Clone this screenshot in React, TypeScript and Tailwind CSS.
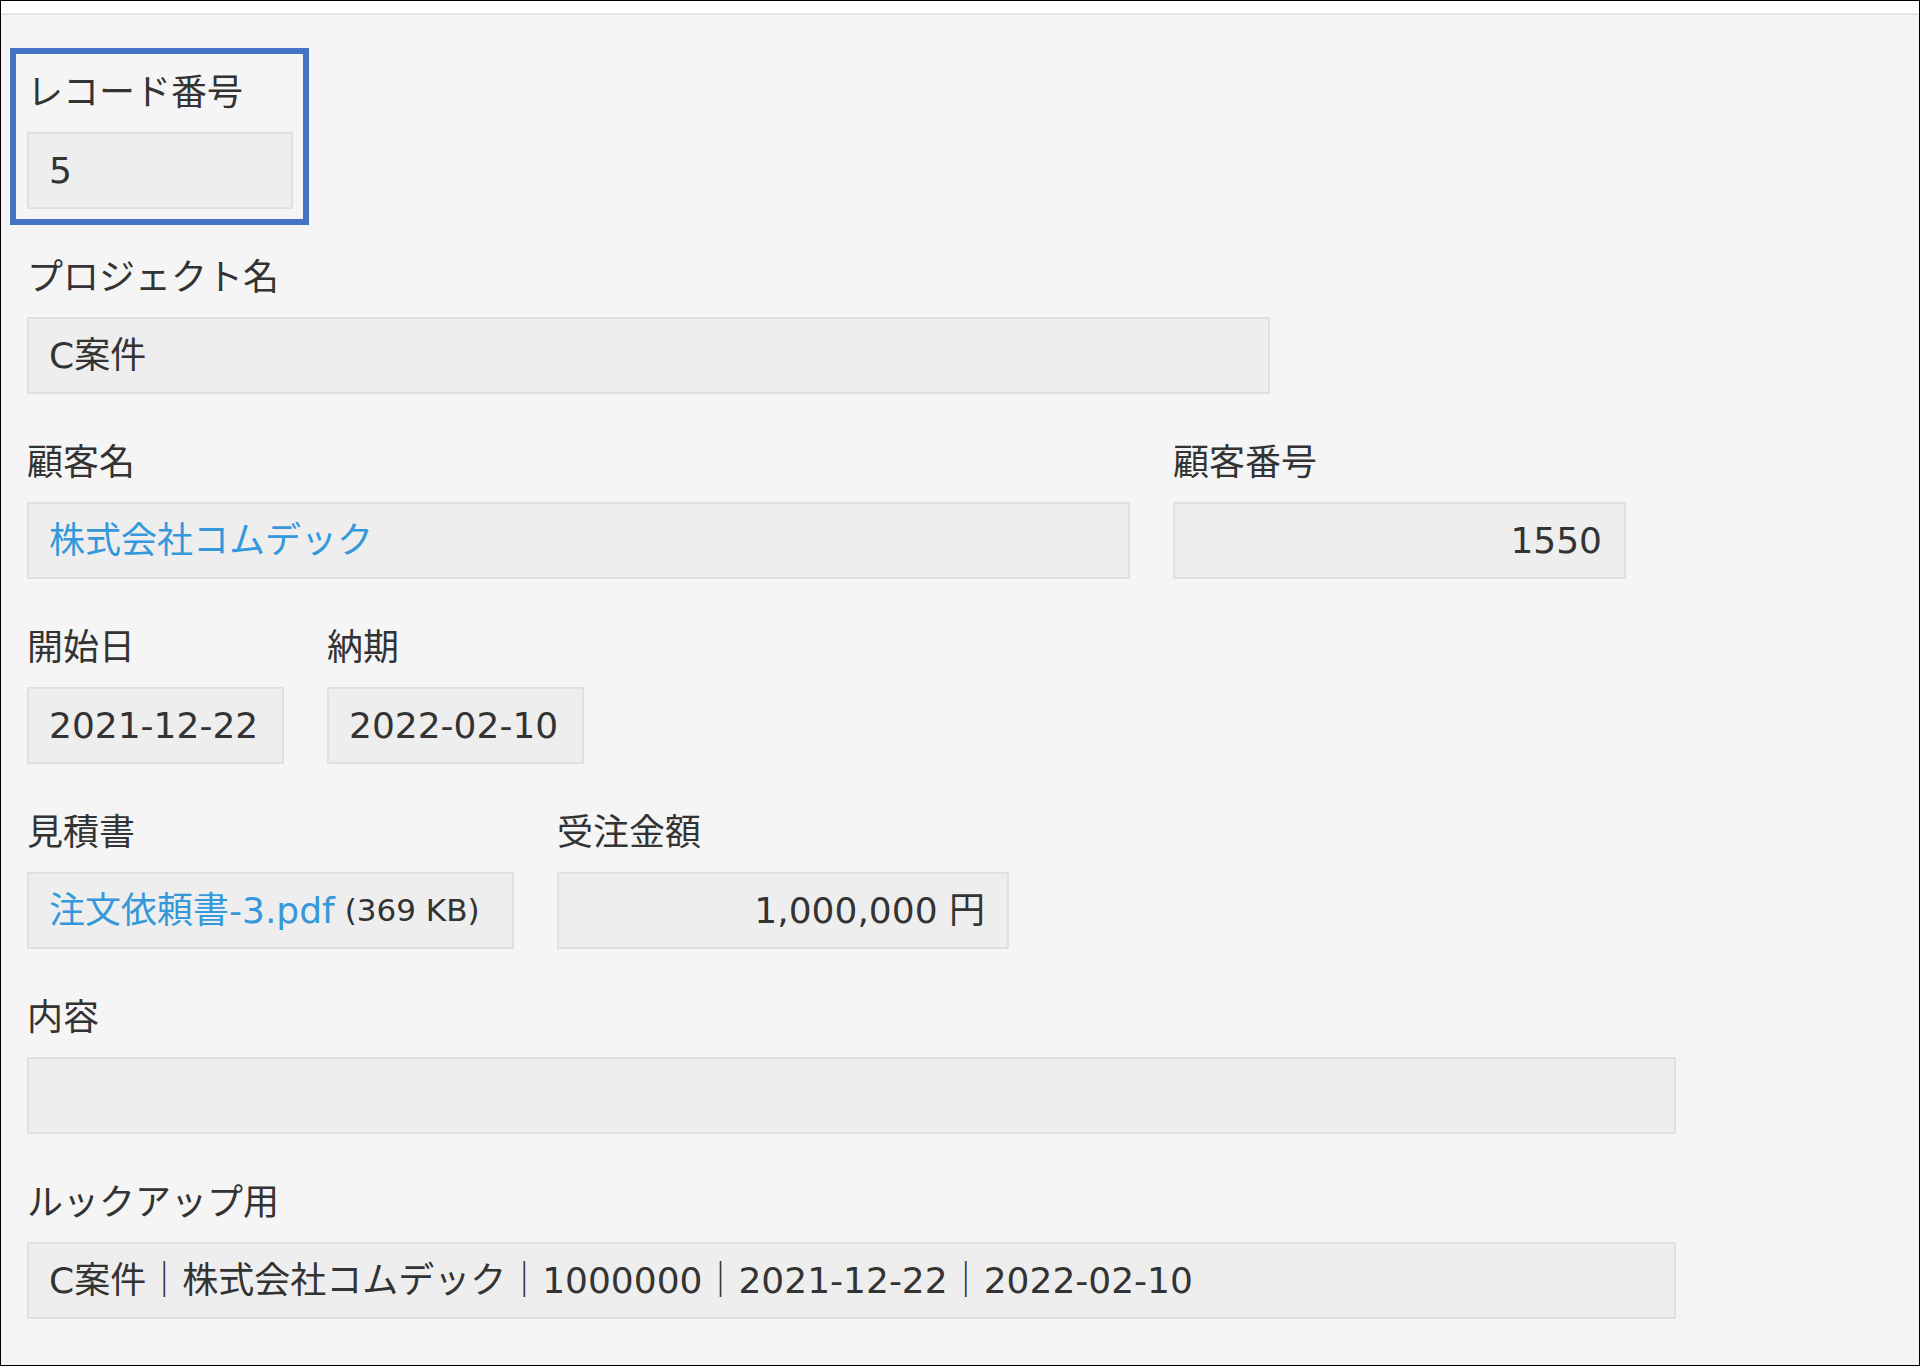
import React from 'react';

type FieldProps = {
  label: string;
  inputClass: string;
  selected?: boolean;
  align?: 'left' | 'right';
  children?: React.ReactNode;
};

const Field: React.FC<FieldProps> = ({ label, inputClass, selected, align = 'left', children }) => {
  return (
    <div
      className={`border-[6px] pt-[15px] pl-[11px] pr-[10px] pb-[10px] ${
        selected ? 'border-[#4472c4]' : 'border-transparent'
      }`}
    >
      <div className="h-[48px] leading-[48px] mb-[15px] text-[36px] text-[#333333] whitespace-nowrap">
        {label}
      </div>
      <div
        className={`h-[77px] border-2 border-[#e0e0e0] bg-[#eeeeee] flex items-center px-[20px] text-[36px] text-[#333333] whitespace-nowrap ${inputClass} ${
          align === 'right' ? 'justify-end' : 'justify-start'
        }`}
      >
        {children}
      </div>
    </div>
  );
};

const App: React.FC = () => {
  return (
    <div
      className="w-[1920px] h-[1366px] border border-black bg-[#f5f5f5] overflow-hidden"
      style={{ fontFamily: "'DejaVu Sans', 'Noto Sans CJK JP', sans-serif" }}
    >
      {/* top strip */}
      <div className="h-[14px] bg-white border-b-2 border-[#e4e8ea]" />

      {/* record form */}
      <div className="pl-[9px] pt-[33px] flex flex-col gap-[8px]">
        <div className="flex gap-[10px]">
          <Field label="レコード番号" inputClass="w-[266px]" selected>
            5
          </Field>
        </div>

        <div className="flex gap-[10px]">
          <Field label="プロジェクト名" inputClass="w-[1243px]">
            C案件
          </Field>
        </div>

        <div className="flex gap-[10px]">
          <Field label="顧客名" inputClass="w-[1103px]">
            <span className="text-[#3498db]">株式会社コムデック</span>
          </Field>
          <Field label="顧客番号" inputClass="w-[453px] pr-[22px]" align="right">
            1550
          </Field>
        </div>

        <div className="flex gap-[10px]">
          <Field label="開始日" inputClass="w-[257px]">
            2021-12-22
          </Field>
          <Field label="納期" inputClass="w-[257px]">
            2022-02-10
          </Field>
        </div>

        <div className="flex gap-[10px]">
          <Field label="見積書" inputClass="w-[487px]">
            <span className="text-[#3498db]">注文依頼書-3.pdf</span>
            <span className="text-[31px] ml-[10px]">(369 KB)</span>
          </Field>
          <Field label="受注金額" inputClass="w-[452px] pr-[22px]" align="right">
            1,000,000 円
          </Field>
        </div>

        <div className="flex gap-[10px]">
          <Field label="内容" inputClass="w-[1649px]" />
        </div>

        <div className="flex gap-[10px]">
          <Field label="ルックアップ用" inputClass="w-[1649px]">
            C案件｜株式会社コムデック｜1000000｜2021-12-22｜2022-02-10
          </Field>
        </div>
      </div>
    </div>
  );
};

export default App;
